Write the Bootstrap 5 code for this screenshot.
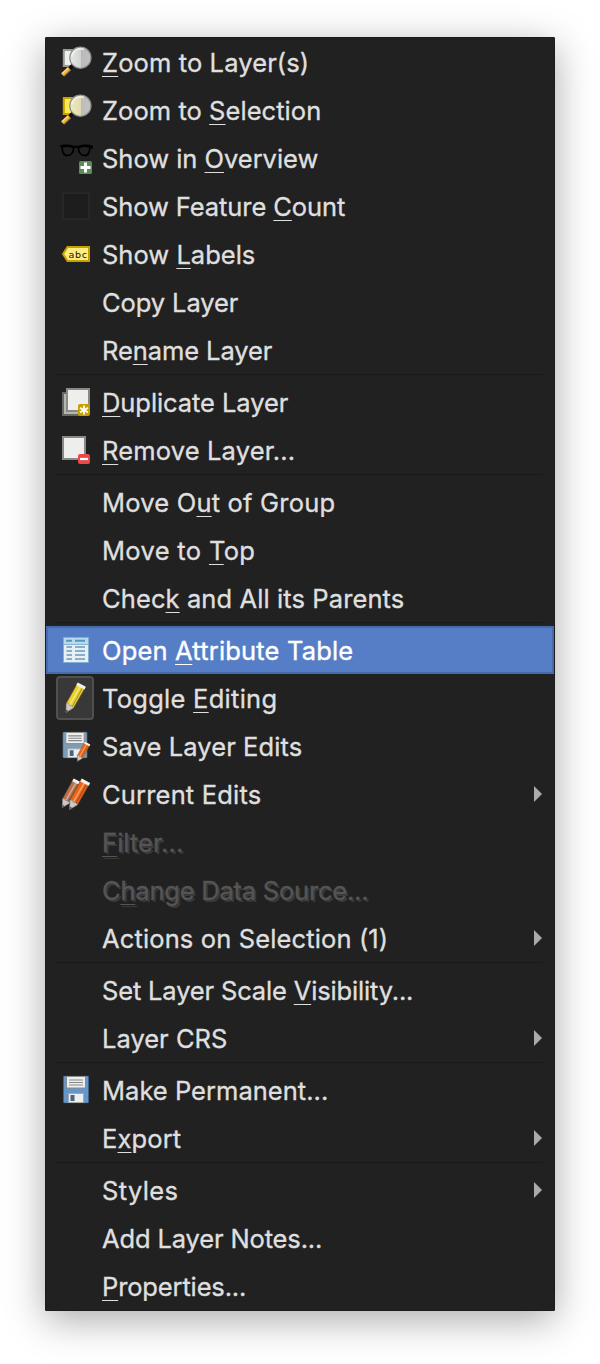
<!DOCTYPE html>
<html lang="en">
<head>
<meta charset="utf-8">
<meta name="viewport" content="width=device-width, initial-scale=1">
<title>Layer menu</title>
<link href="https://cdn.jsdelivr.net/npm/bootstrap@5.3.0/dist/css/bootstrap.min.css" rel="stylesheet">
<style>
body{background:#fff;font-family:Inter,"Liberation Sans",sans-serif;padding:37px 45px 53px}
.layer-menu{background:#212121;border:1px solid #1b1b1b;border-radius:1px;box-shadow:0 9px 38px rgba(0,0,0,.34)}
.item{height:48px;padding-left:10px;padding-right:12px;color:#dfdfdf;font-size:25.5px;line-height:48px;white-space:nowrap;text-decoration:none}
.item svg.ico{width:40px;height:48px;flex:none}
.item .gap-ico{width:40px;flex:none}
.label-text{margin-left:6px;padding-top:1px;height:48px;-webkit-text-stroke:.35px currentColor}
.label-text u{text-decoration:underline;text-decoration-thickness:1px;text-underline-offset:4px;text-decoration-skip-ink:none}
.item.chosen{background:#567ec7;color:#fff;box-shadow:inset 0 0 0 2px #456ba9}
.item.off{color:#555;text-shadow:2px 2px 0 #393939}
.arrow{width:8px;height:16px;background:#aaa;clip-path:polygon(0 0,100% 50%,0 100%);margin-left:auto}
.rule{height:4px;margin:0 11px 0 9px;border-top:1px solid #191919}
</style>
</head>
<body>
<svg width="0" height="0" class="position-absolute" aria-hidden="true">
<defs>
<linearGradient id="lens" x1="0" x2="1"><stop offset="0" stop-color="#e4e8e6"/><stop offset=".5" stop-color="#d2d5d3"/><stop offset=".55" stop-color="#b9bbba"/><stop offset="1" stop-color="#bfc0bf"/></linearGradient>
<linearGradient id="lensY" x1="0" x2="1"><stop offset="0" stop-color="#eeeac0"/><stop offset=".5" stop-color="#e3dcae"/><stop offset=".55" stop-color="#bdbdba"/><stop offset="1" stop-color="#c2c3c2"/></linearGradient>
</defs>
<symbol id="handle" viewBox="0 0 40 48"><path d="M17 27l-4 4" stroke="#111" stroke-width="3.5"/><path d="M13.5 30.5L6.5 37" stroke="#77716a" stroke-width="5"/><path d="M13 30.5L6.5 36.7" stroke="#f6b73c" stroke-width="3.2"/><path d="M12 30L5.8 35.8" stroke="#fff0c8" stroke-width="1"/></symbol>
<symbol id="pencil" viewBox="0 0 26 34"><path d="M13.6 1.5L22 6 9.5 28 1.3 33 1.6 23.2Z" fill="currentColor" stroke="#6b4b32" stroke-width=".7"/><path d="M16.5 5.5L5.2 25" stroke="#fff" stroke-opacity=".4" stroke-width="1.6"/><path d="M19 6.5L7.7 27" stroke="#000" stroke-opacity=".25" stroke-width="1.2"/><path d="M1.6 23.2l2.5.3 1 2 2.2.2 2.2 2.3L1.3 33Z" fill="#c9c9c5" stroke="#777" stroke-width=".5"/><path d="M1.4 29.8L4 31.3 1.2 33.2Z" fill="#555"/><path d="M13.8 1.1L22.4 5.6 20.8 8.5 12.2 4Z" fill="#f1f1f1"/></symbol>
<symbol id="disk" viewBox="0 0 26 28"><rect x=".5" y=".5" width="25" height="27" rx="1" fill="currentColor" stroke="#41698f" stroke-opacity=".6"/><path d="M3.5 1h19v11.5h-19z" fill="#eee" stroke="#8c8c88"/><path d="M6 4.5h14M6 7h14M6 9.5h14" stroke="#85898a" stroke-width="1.2"/><path d="M5.5 18h15v9h-15z" fill="#eee" stroke="#a9a9a3"/><path d="M7.5 19.500h4v6H7.500z" fill="#466489"/></symbol>
</svg>

<nav class="layer-menu d-flex flex-column" aria-label="Layer menu">
<a class="item d-flex align-items-center"><svg class="ico" viewBox="0 0 40 48"><path d="M7.8 12h13v16h-13z" fill="#eeeeec" stroke="#989a96" stroke-width="2"/><use href="#handle"/><circle cx="24.4" cy="19.7" r="10.6" fill="url(#lens)" stroke="#8c8e8b" stroke-width="1.2"/><path d="M16 18a9 9 0 0 1 12-6.600" fill="none" stroke="#f5f5f5" stroke-width="2" opacity=".7"/></svg><span class="label-text" data-w="207"><u>Z</u>oom to Layer(s)</span></a>
<a class="item d-flex align-items-center"><svg class="ico" viewBox="0 0 40 48"><path d="M7.8 12h13v16h-13z" fill="#fce94f" stroke="#c4a000" stroke-width="2"/><use href="#handle"/><circle cx="24.4" cy="19.7" r="10.6" fill="url(#lensY)" stroke="#8c8e8b" stroke-width="1.2"/><path d="M16 18a9 9 0 0 1 12-6.600" fill="none" stroke="#f5f5f5" stroke-width="2" opacity=".7"/></svg><span class="label-text" data-w="219">Zoom to <u>S</u>election</span></a>
<a class="item d-flex align-items-center"><svg class="ico" viewBox="0 0 40 48"><path d="M4 12.300C8 11 15 11 18 13q2-1 4 0c3-2 10-2 14-.7v1.500l-1.300.8" fill="none" stroke="#000" stroke-width="1.800"/><path d="M6.300 13c-.5 4 1.200 8.500 5 8.500 4.500 0 6-3.500 6.500-7.500-3-1.800-8-2-11.500-1zM33.700 13c.5 4-1.200 8.500-5 8.500-4.500 0-6-3.500-6.500-7.500 3-1.800 8-2 11.500-1z" fill="none" stroke="#000" stroke-width="1.700"/><rect x="23" y="27" width="13" height="13" rx="1.500" fill="#5b8c5a"/><path d="M29.500 28.500v10M24.500 33.500h10" stroke="#fff" stroke-width="3"/></svg><span class="label-text" data-w="216">Show in <u>O</u>verview</span></a>
<a class="item d-flex align-items-center"><svg class="ico" viewBox="0 0 40 48"><rect x="7" y="13" width="26" height="26" transform="translate(0 -2)" fill="#1d1d1d" stroke="#272727" stroke-width="2"/></svg><span class="label-text" data-w="243">Show Feature <u>C</u>ount</span></a>
<a class="item d-flex align-items-center"><svg class="ico" viewBox="0 0 40 48"><path d="M11.500 17H33v14H11.500L7 24Z" fill="#ffec80" stroke="#c4a000" stroke-width="2"/><text x="12.500" y="28" font-family="DejaVu Sans" font-size="9.500" textLength="18.500" fill="#111">abc</text></svg><span class="label-text" data-w="153">Show <u>L</u>abels</span></a>
<a class="item d-flex align-items-center"><span class="gap-ico"></span><span class="label-text" data-w="136">Copy Layer</span></a>
<a class="item d-flex align-items-center"><span class="gap-ico"></span><span class="label-text" data-w="170">Re<u>n</u>ame Layer</span></a>
<div class="rule"></div>
<a class="item d-flex align-items-center"><svg class="ico" viewBox="0 0 40 48"><path d="M7 15h20v22H7z" fill="#b5b7ab" stroke="#666861" stroke-width="2"/><path d="M11 11h22v22H11z" fill="#eeeeec" stroke="#888a85" stroke-width="2"/><rect x="22" y="26" width="12" height="12" rx="2" fill="#c4a000"/><path d="M28 27.500v9M24 29.800l8 4.500M32 29.800l-8 4.500" stroke="#fffbe8" stroke-width="1.900"/></svg><span class="label-text" data-w="186"><u>D</u>uplicate Layer</span></a>
<a class="item d-flex align-items-center"><svg class="ico" viewBox="0 0 40 48"><path d="M7 11h22v22H7z" fill="#eeeeec" stroke="#888a85" stroke-width="2"/><rect x="22" y="28" width="12" height="10" rx="2" fill="#ed4848"/><path d="M24 33h8" stroke="#fff" stroke-width="2.200"/></svg><span class="label-text" data-w="193"><u>R</u>emove Layer...</span></a>
<div class="rule"></div>
<a class="item d-flex align-items-center"><span class="gap-ico"></span><span class="label-text" data-w="233">Move O<u>u</u>t of Group</span></a>
<a class="item d-flex align-items-center"><span class="gap-ico"></span><span class="label-text" data-w="153">Move to <u>T</u>op</span></a>
<a class="item d-flex align-items-center"><span class="gap-ico"></span><span class="label-text" data-w="302">Chec<u>k</u> and All its Parents</span></a>
<div class="rule"></div>
<a class="item chosen d-flex align-items-center"><svg class="ico" viewBox="0 0 40 48"><path d="M7.500 11.500h25v25h-25z" fill="#e9eef0" stroke="#82afd6"/><path d="M8 12h24v6H8z" fill="#b5dbea"/><path d="M10 14.700h6M19 14.700h10" stroke="#5f93bd" stroke-width="2"/><path d="M8 18.500h24" stroke="#8bb4d3"/><path d="M10.500 21h5.500M19 21h10M10.500 25h5.500M19 25h10M10.500 29h5.500M19 29h10M10.500 33h5.500M19 33h10" stroke="#6796c8" stroke-width="1.300"/></svg><span class="label-text" data-w="251">Open <u>A</u>ttribute Table</span></a>
<a class="item d-flex align-items-center"><svg class="ico" viewBox="0 0 40 48"><rect x="1" y="3" width="36" height="42" rx="3" fill="#383838" stroke="#505050" stroke-width="2"/><use href="#pencil" x="8.500" y="7.500" width="25" height="32" color="#e9d22d"/></svg><span class="label-text" data-w="175">Toggle <u>E</u>diting</span></a>
<a class="item d-flex align-items-center"><svg class="ico" viewBox="0 0 40 48"><use href="#disk" x="5.500" y="9.500" width="27" height="27" color="#7c9db5"/><use href="#pencil" x="20" y="19" width="17" height="21" color="#ef6b1a"/></svg><span class="label-text" data-w="200">Save Layer Edits</span></a>
<a class="item d-flex align-items-center"><svg class="ico" viewBox="0 0 40 48"><use href="#pencil" x="4" y="7.500" width="26" height="31" color="#b8714a"/><use href="#pencil" x="11.500" y="7.500" width="27" height="33" color="#ee6215"/></svg><span class="label-text" data-w="159">Current Edits</span><span class="arrow"></span></a>
<a class="item off d-flex align-items-center"><span class="gap-ico"></span><span class="label-text" data-w="81"><u>F</u>ilter...</span></a>
<a class="item off d-flex align-items-center"><span class="gap-ico"></span><span class="label-text" data-w="266">C<u>h</u>ange Data Source...</span></a>
<a class="item d-flex align-items-center"><span class="gap-ico"></span><span class="label-text" data-w="286">Actions on Selection (1)</span><span class="arrow"></span></a>
<div class="rule"></div>
<a class="item d-flex align-items-center"><span class="gap-ico"></span><span class="label-text" data-w="311">Set Layer Scale <u>V</u>isibility...</span></a>
<a class="item d-flex align-items-center"><span class="gap-ico"></span><span class="label-text" data-w="125">Layer CRS</span><span class="arrow"></span></a>
<div class="rule"></div>
<a class="item d-flex align-items-center"><svg class="ico" viewBox="0 0 40 48"><use href="#disk" x="7" y="9.500" width="26" height="28" color="#6496cb"/></svg><span class="label-text" data-w="226">Make Permanent...</span></a>
<a class="item d-flex align-items-center"><span class="gap-ico"></span><span class="label-text" data-w="79">E<u>x</u>port</span><span class="arrow"></span></a>
<div class="rule"></div>
<a class="item d-flex align-items-center"><span class="gap-ico"></span><span class="label-text" data-w="76">Styles</span><span class="arrow"></span></a>
<a class="item d-flex align-items-center"><span class="gap-ico"></span><span class="label-text" data-w="220">Add Layer Notes...</span></a>
<a class="item d-flex align-items-center"><span class="gap-ico"></span><span class="label-text" data-w="144"><u>P</u>roperties...</span></a>
</nav>
<script src="https://cdn.jsdelivr.net/npm/bootstrap@5.3.0/dist/js/bootstrap.bundle.min.js"></script>
<script>
// Track every label so that it fills its nominal width.
document.querySelectorAll('.label-text').forEach(function (el) {
  var extra = Number(el.dataset.w) + .3 - el.getBoundingClientRect().width;
  el.style.letterSpacing = (extra / el.textContent.length).toFixed(3) + 'px';
});
</script>
</body>
</html>
